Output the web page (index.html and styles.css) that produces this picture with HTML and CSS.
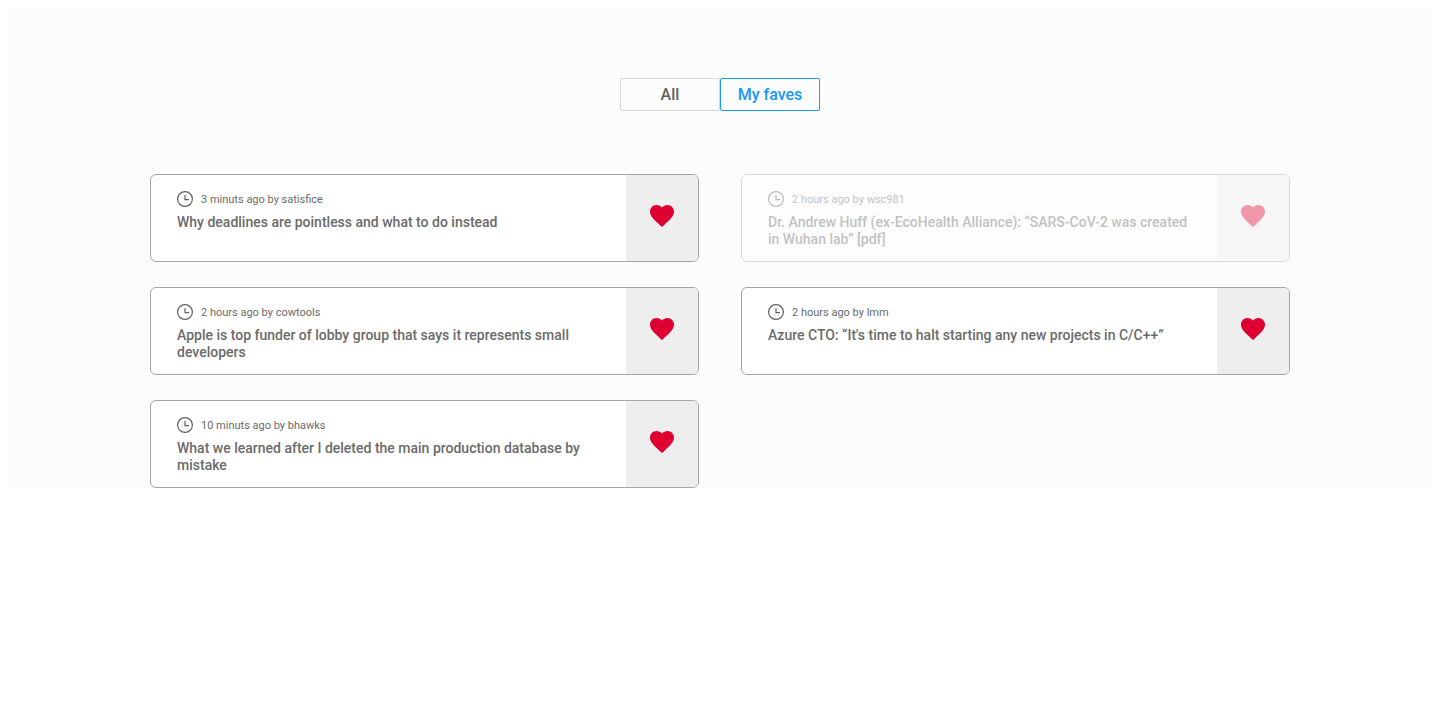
FILE: index.html
```html
<!DOCTYPE html>
<html lang="en">
<head>
<meta charset="utf-8">
<meta name="viewport" content="width=device-width, initial-scale=1">
<title>My faves</title>
<link rel="stylesheet" href="styles.css">
</head>
<body>
<svg class="sprite" aria-hidden="true">
  <symbol id="clock" viewBox="0 0 16 16">
    <circle cx="8" cy="8" r="7.4" fill="none" stroke="#606060" stroke-width="1.2"/>
    <path d="M8 4V8.6H12" fill="none" stroke="#606060" stroke-width="1.2"/>
  </symbol>
  <symbol id="heart" viewBox="0 0 24 22">
    <path fill="#dd0031" d="M12 22l-1.74-1.56C4.08 14.87 0 11.2 0 6.6 0 2.88 2.9 0 6.6 0 8.69 0 10.7.96 12 2.49 13.3.96 15.31 0 17.4 0 21.1 0 24 2.88 24 6.6c0 4.6-4.08 8.27-10.26 13.86L12 22z"/>
  </symbol>
</svg>
<main class="page">
  <div class="tabs">
    <button class="tab" type="button">All</button>
    <button class="tab tab-active" type="button">My faves</button>
  </div>
  <div class="posts">
    <article class="post">
      <a class="post-link" href="#"><span class="meta"><svg class="clock"><use href="#clock"/></svg>3 minuts ago by satisfice</span><span class="title">Why deadlines are pointless and what to do instead</span></a>
      <button class="fave" type="button" aria-label="Remove from faves"><svg class="heart"><use href="#heart"/></svg></button>
    </article>
    <article class="post post-faded">
      <a class="post-link" href="#"><span class="meta"><svg class="clock"><use href="#clock"/></svg>2 hours ago by wsc981</span><span class="title">Dr. Andrew Huff (ex-EcoHealth Alliance): “SARS-CoV-2 was created in Wuhan lab” [pdf]</span></a>
      <button class="fave" type="button" aria-label="Remove from faves"><svg class="heart"><use href="#heart"/></svg></button>
    </article>
    <article class="post">
      <a class="post-link" href="#"><span class="meta"><svg class="clock"><use href="#clock"/></svg>2 hours ago by cowtools</span><span class="title">Apple is top funder of lobby group that says it represents small developers</span></a>
      <button class="fave" type="button" aria-label="Remove from faves"><svg class="heart"><use href="#heart"/></svg></button>
    </article>
    <article class="post">
      <a class="post-link" href="#"><span class="meta"><svg class="clock"><use href="#clock"/></svg>2 hours ago by lmm</span><span class="title">Azure CTO: “It's time to halt starting any new projects in C/C++”</span></a>
      <button class="fave" type="button" aria-label="Remove from faves"><svg class="heart"><use href="#heart"/></svg></button>
    </article>
    <article class="post">
      <a class="post-link" href="#"><span class="meta"><svg class="clock"><use href="#clock"/></svg>10 minuts ago by bhawks</span><span class="title">What we learned after I deleted the main production database by mistake</span></a>
      <button class="fave" type="button" aria-label="Remove from faves"><svg class="heart"><use href="#heart"/></svg></button>
    </article>
  </div>
</main>
</body>
</html>
```
FILE: styles.css
```css
* {
  box-sizing: border-box;
}

body {
  margin: 8px;
  background: #fff;
  font-family: Roboto, "Liberation Sans", sans-serif;
}

.sprite {
  display: none;
}

.page {
  padding: 70px 16px 0;
  background: #fcfcfc;
}

.tabs {
  display: flex;
  justify-content: center;
  margin-bottom: 63px;
}

.tab {
  width: 100px;
  padding: 6px 0;
  border: 1px solid #d6d6d6;
  border-radius: 2px;
  background: #fcfcfc;
  color: #606060;
  font: 500 16px/19px Roboto, sans-serif;
}

.tab-active {
  border-color: #1797ff;
  color: #1797ff;
}

.posts {
  display: grid;
  grid-template-columns: 1fr 1fr;
  gap: 25px 42px;
  max-width: 1140px;
  margin: 0 auto;
}

.post {
  display: flex;
  min-height: 88px;
  border: 1px solid #a6a6a6;
  border-radius: 6px;
  background: #fff;
  overflow: hidden;
}

.post-faded {
  opacity: 0.4;
}

.post-link {
  flex: 1;
  padding: 16px 26px 12px;
  color: #6b6b6b;
  text-decoration: none;
}

.meta {
  display: flex;
  align-items: flex-start;
  gap: 8px;
  margin-bottom: 6px;
  font-size: 11px;
  line-height: 17px;
}

.clock {
  width: 16px;
  height: 16px;
}

.title {
  display: block;
  font-size: 14px;
  font-weight: 500;
  line-height: 17px;
}

.fave {
  display: flex;
  flex: none;
  align-items: center;
  justify-content: center;
  width: 72px;
  padding: 0 0 4px;
  border: 0;
  background: #eee;
}

.heart {
  width: 24px;
  height: 22px;
}
```
